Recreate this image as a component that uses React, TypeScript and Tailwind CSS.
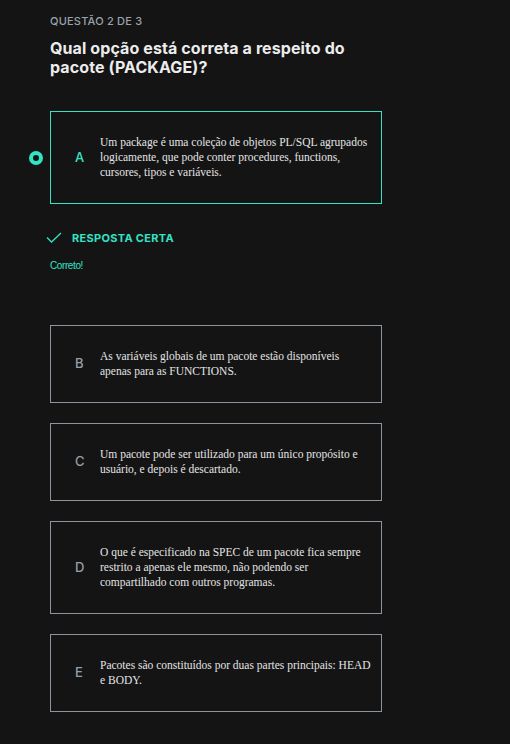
import React from "react";

type Option = {
  letter: string;
  text: string;
};

const options: Option[] = [
  {
    letter: "B",
    text: "As variáveis globais de um pacote estão disponíveis apenas para as FUNCTIONS.",
  },
  {
    letter: "C",
    text: "Um pacote pode ser utilizado para um único propósito e usuário, e depois é descartado.",
  },
  {
    letter: "D",
    text: "O que é especificado na SPEC de um pacote fica sempre restrito a apenas ele mesmo, não podendo ser compartilhado com outros programas.",
  },
  {
    letter: "E",
    text: "Pacotes são constituídos por duas partes principais: HEAD e BODY.",
  },
];

function OptionBox({ letter, text, selected }: Option & { selected?: boolean }) {
  return (
    <div
      className={`relative flex items-center w-[332px] border py-[23px] pl-[24px] pr-[8px] ${
        selected ? "border-[#33e3c4]" : "border-[#8c959d]"
      }`}
    >
      {selected && (
        <span className="absolute left-[-22px] top-1/2 -translate-y-1/2 w-[14px] h-[14px] rounded-full border-[4px] border-[#33e3c4]" />
      )}
      <span
        className={`w-[25px] shrink-0 text-[13px] font-medium font-['Inter',sans-serif] ${
          selected ? "text-[#33e3c4]" : "text-[#95a0a8]"
        }`}
      >
        {letter}
      </span>
      <p className="flex-1 text-[11.5px] leading-[15px] text-[#e4e4e4] font-['Liberation_Serif',serif]">
        {text}
      </p>
    </div>
  );
}

export default function App() {
  return (
    <div className="w-[510px] min-h-[744px] bg-[#141414] pl-[50px] pt-[14px] font-['Inter',sans-serif]">
      <div className="text-[11px] leading-[14px] font-medium tracking-[0.2px] text-[#9aa3ab]">
        QUESTÃO 2 DE 3
      </div>
      <h1 className="mt-[11px] w-[320px] text-[16px] leading-[19px] font-bold tracking-[0.1px] text-[#ececec]">
        Qual opção está correta a respeito do pacote (PACKAGE)?
      </h1>

      <div className="mt-[34px]">
        <OptionBox
          selected
          letter="A"
          text="Um package é uma coleção de objetos PL/SQL agrupados logicamente, que pode conter procedures, functions, cursores, tipos e variáveis."
        />
      </div>

      <div className="mt-[27px] flex items-center gap-[10px] -ml-[4px]">
        <svg width="16" height="12" viewBox="0 0 16 12" fill="none">
          <path d="M1 5.5 L5.5 10 L15 1" stroke="#33e3c4" strokeWidth="1.3" />
        </svg>
        <span className="text-[11px] leading-[14px] font-bold tracking-[0.3px] text-[#33e3c4]">
          RESPOSTA CERTA
        </span>
      </div>

      <div className="mt-[15px] text-[10px] leading-[12px] tracking-[-0.4px] text-[#33e3c4] font-['Liberation_Sans',sans-serif]">
        Correto!
      </div>

      <div className="mt-[53px] flex flex-col gap-[20px] pb-[34px]">
        {options.map((o) => (
          <OptionBox key={o.letter} {...o} />
        ))}
      </div>
    </div>
  );
}
